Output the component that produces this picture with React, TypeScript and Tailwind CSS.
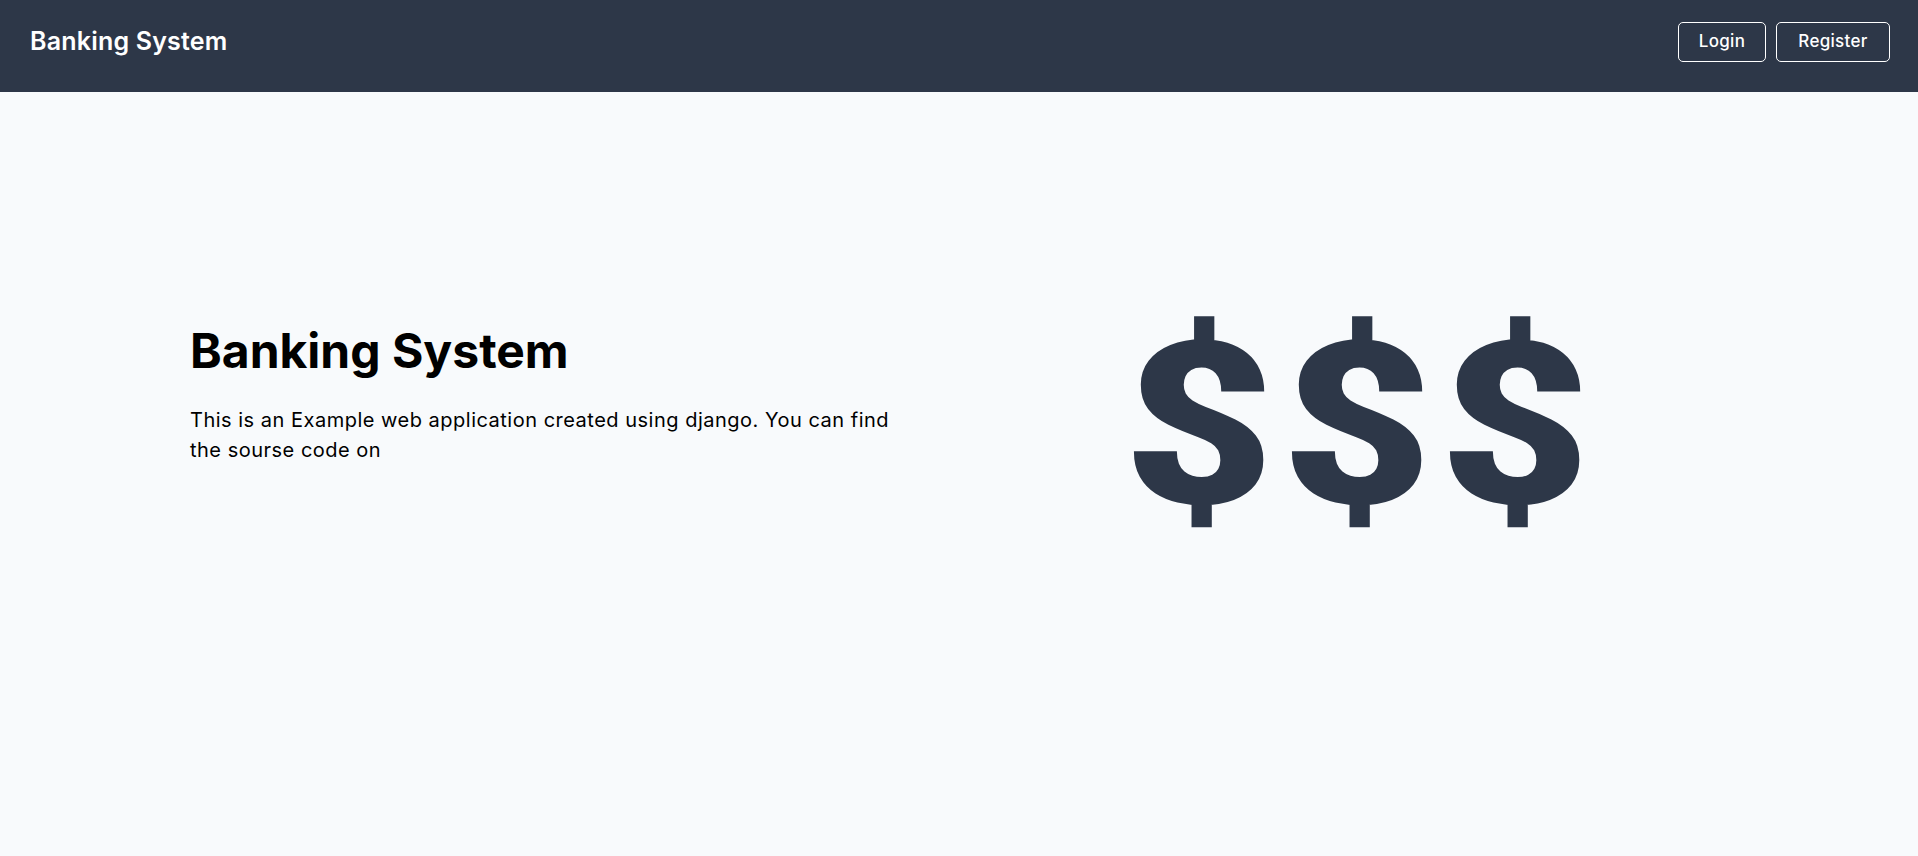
import React from "react";

export default function App() {
  return (
    <div className="min-h-screen bg-[#f8fafc] font-['Inter','Noto_Sans',sans-serif] text-black">
      <nav className="h-[92px] bg-[#2d3748] flex items-center justify-between pl-[30px] pr-[28px] pb-[8px]">
        <a href="#" className="text-white text-[25px] font-semibold tracking-[0.2px]">
          Banking System
        </a>
        <div className="flex gap-[10px]">
          <button className="h-[40px] w-[88px] rounded-[5px] border border-white text-white text-[17px] font-medium tracking-[0.3px]">
            Login
          </button>
          <button className="h-[40px] w-[114px] rounded-[5px] border border-white text-white text-[17px] font-medium tracking-[0.3px]">
            Register
          </button>
        </div>
      </nav>
      <main className="flex items-start pl-[190px] pt-[235px]">
        <div className="w-[720px]">
          <h1 className="text-[48px] leading-[48px] font-bold">Banking System</h1>
          <p className="mt-[30px] text-[20px] leading-[30px] tracking-[0.5px] w-[720px]">
            This is an Example web application created using django. You can find the sourse code on
          </p>
        </div>
        <div className="ml-[223px] -mt-[15px] flex gap-[26px] text-[#2d3748] font-['Roboto',sans-serif] font-black text-[227px] leading-none">
          <span className="inline-block w-[132px] text-center scale-x-[1.15]">$</span>
          <span className="inline-block w-[132px] text-center scale-x-[1.15]">$</span>
          <span className="inline-block w-[132px] text-center scale-x-[1.15]">$</span>
        </div>
      </main>
    </div>
  );
}
